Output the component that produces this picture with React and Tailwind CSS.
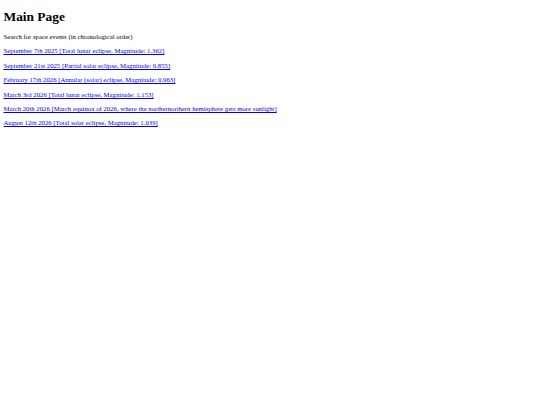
const events = [
  "September 7th 2025 [Total lunar eclipse, Magnitude: 1.362]",
  "September 21st 2025 [Partial solar eclipse, Magnitude: 0.855]",
  "February 17th 2026 [Annular (solar) eclipse, Magnitude: 0.963]",
  "March 3rd 2026 [Total lunar eclipse, Magnitude: 1.153]",
  "March 20th 2026 [March equinox of 2026, where the northernorthern hemisphere gets more sunlight]",
  "August 12th 2026 [Total solar eclipse, Magnitude: 1.039]",
];

export default function App() {
  return (
    <div className="min-h-[405px] bg-white px-[3.5px] py-[0.1px] text-black font-['Liberation_Serif',serif]">
      <h1 className="text-[13.4px] font-bold leading-[16px] mt-[8.5px] mb-[8.5px]">Main Page</h1>
      <p className="text-[6.72px] leading-[8px] my-[6.4px]">
        Search for space events (in chronological order)
      </p>
      {events.map((e) => (
        <p key={e} className="text-[6.72px] leading-[8px] my-[6.4px]">
          <a href="#" className="text-[#0000ee] underline [text-decoration-skip-ink:none]">
            {e}
          </a>
        </p>
      ))}
    </div>
  );
}
